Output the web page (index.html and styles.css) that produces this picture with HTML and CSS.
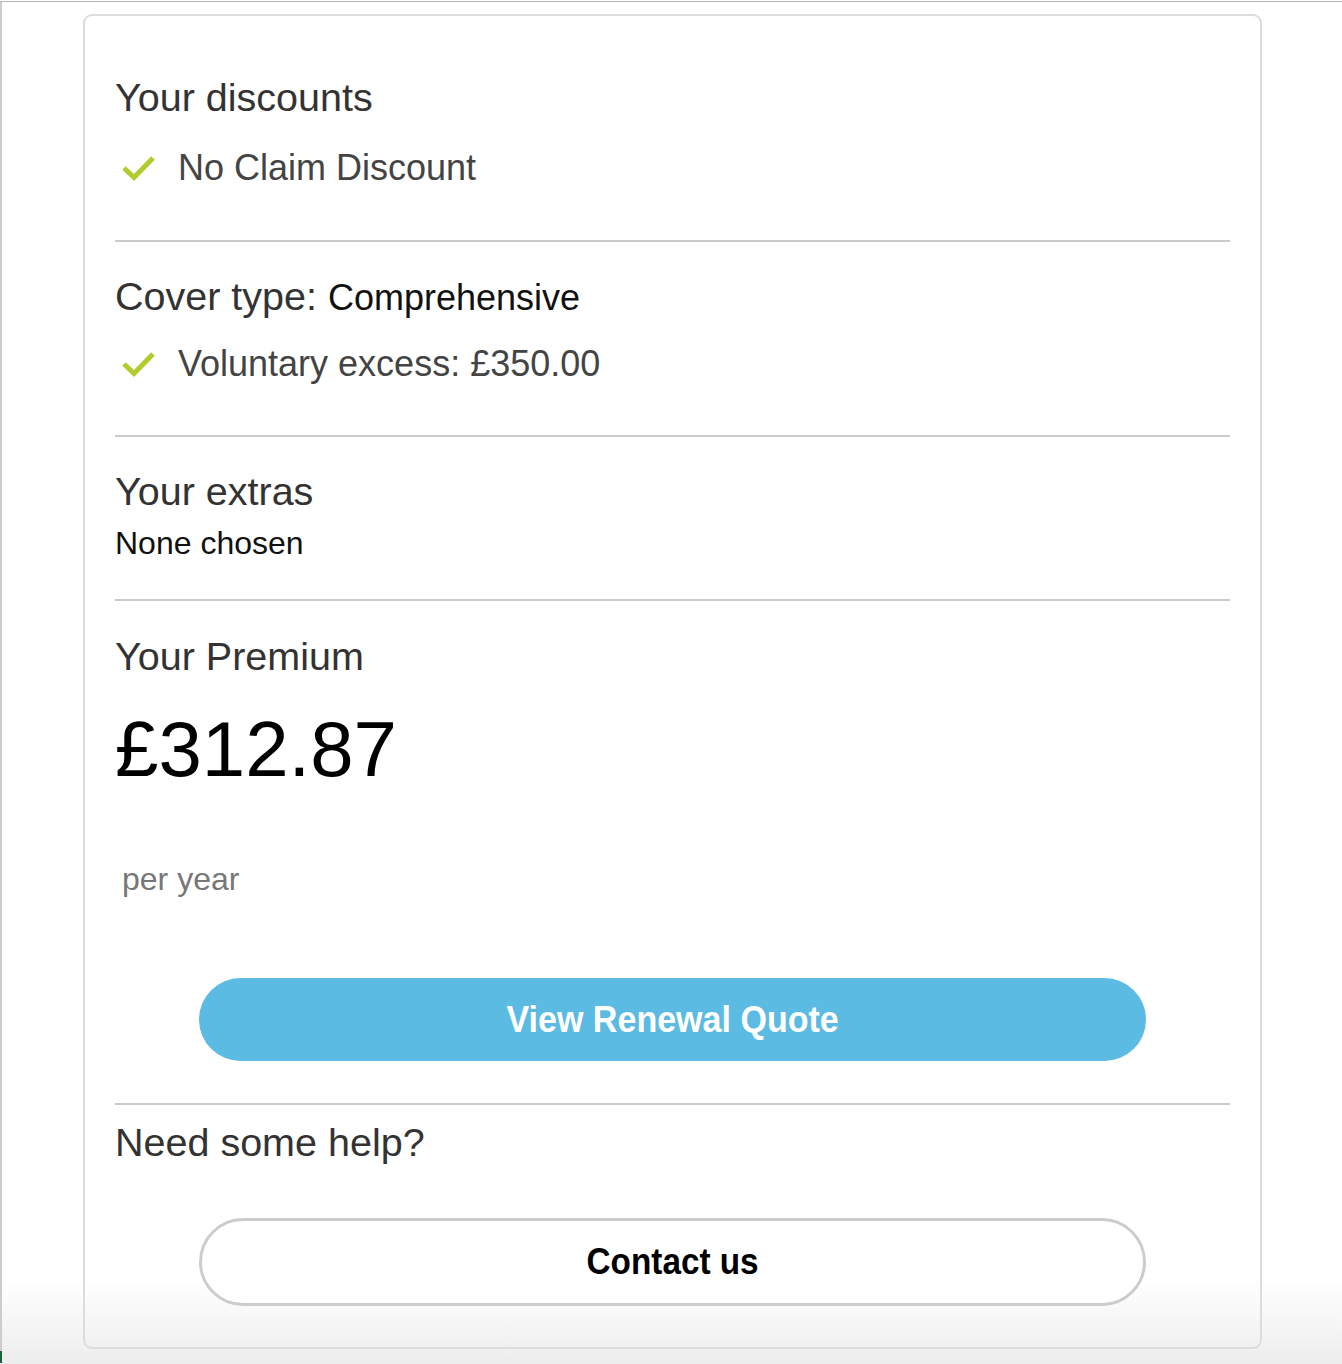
FILE: index.html
```html
<!DOCTYPE html>
<html lang="en">
<head>
<meta charset="utf-8">
<title>Your renewal</title>
<link rel="stylesheet" href="styles.css">
</head>
<body>
<div class="frame">
  <div class="card">
    <section class="section s-discounts">
      <h2 class="heading">Your discounts</h2>
      <div class="check-row">
        <svg class="check" viewBox="0 0 36 28" width="36" height="28" aria-hidden="true"><path d="M2 14 L12 23.5 L31 4" fill="none" stroke="#b3cb2c" stroke-width="5"/></svg>
        <span>No Claim Discount</span>
      </div>
    </section>
    <section class="section s-cover">
      <h2 class="heading">Cover type: <span class="heading-value">Comprehensive</span></h2>
      <div class="check-row">
        <svg class="check" viewBox="0 0 36 28" width="36" height="28" aria-hidden="true"><path d="M2 14 L12 23.5 L31 4" fill="none" stroke="#b3cb2c" stroke-width="5"/></svg>
        <span>Voluntary excess: £350.00</span>
      </div>
    </section>
    <section class="section s-extras">
      <h2 class="heading">Your extras</h2>
      <p class="plain">None chosen</p>
    </section>
    <section class="section s-premium">
      <h2 class="heading">Your Premium</h2>
      <p class="price">£312.87</p>
      <p class="period">per year</p>
      <a class="btn btn-primary" href="#"><span class="btn-label btn-label-wide">View Renewal Quote</span></a>
    </section>
    <section class="section s-help">
      <h2 class="heading">Need some help?</h2>
      <a class="btn btn-outline" href="#"><span class="btn-label">Contact us</span></a>
    </section>
  </div>
</div>
</body>
</html>
```

FILE: styles.css
```css
html, body {
  margin: 0;
  padding: 0;
}

body {
  font-family: "Liberation Sans", Arial, Helvetica, sans-serif;
  background: linear-gradient(to bottom, #ffffff 0, #ffffff 1280px, #ededed 1364px);
  min-height: 1364px;
  color: #333;
}

.frame {
  position: relative;
  margin-top: 1px;
  border-top: 1px solid #b4b4b4;
  border-left: 2px solid #cccccc;
  min-height: 1362px;
  box-sizing: border-box;
  padding-top: 12px;
}

.frame::after {
  content: "";
  position: absolute;
  left: -2px;
  bottom: 0;
  width: 2px;
  height: 12px;
  background: #17663a;
}

.card {
  margin-left: 81px;
  width: 1179px;
  box-sizing: border-box;
  border: 2px solid #dcdcdc;
  border-radius: 9px;
  padding: 0 30px;
  background: transparent;
}

.section {
  border-bottom: 2px solid #cbcbcb;
}

.section:last-child {
  border-bottom: none;
}

.heading {
  margin: 0;
  font-size: 39.5px;
  line-height: 45px;
  font-weight: normal;
  color: #333;
}

.heading-value {
  font-size: 36px;
  line-height: 1;
  color: #111;
}

.check-row {
  display: flex;
  align-items: center;
  font-size: 36px;
  line-height: 42px;
  color: #444;
}

.check {
  margin-left: 7px;
  margin-right: 20px;
  flex: none;
}

.plain {
  margin: 11px 0 0;
  font-size: 32px;
  line-height: 37px;
  color: #111;
}

.price {
  margin: 25px 0 0;
  font-size: 78px;
  line-height: 90px;
  color: #000;
}

.period {
  margin: 67px 0 0 7px;
  font-size: 32px;
  line-height: 37px;
  color: #777;
}

.s-discounts {
  padding: 59px 0 51px;
}
.s-discounts .check-row {
  margin-top: 27px;
}

.s-cover {
  padding: 32px 0 50px;
}
.s-cover .check-row {
  margin-top: 24px;
}

.s-extras {
  padding: 32px 0 37px;
}

.s-premium {
  padding: 33px 0 42px;
}

.s-help {
  padding: 15px 0 41px;
}

.btn {
  display: flex;
  align-items: center;
  justify-content: center;
  width: 85%;
  margin: 0 auto;
  box-sizing: border-box;
  border-radius: 60px;
  text-decoration: none;
  font-weight: bold;
  font-size: 37px;
}

.btn-label {
  display: inline-block;
  transform: scaleX(0.9);
}

.btn-label-wide {
  transform: scaleX(0.92);
}

.btn-primary {
  margin-top: 80px;
  height: 83px;
  background: #5bbbe3;
  color: #fff;
}

.btn-outline {
  margin-top: 53px;
  height: 88px;
  border: 3px solid #cccccc;
  background: #fff;
  color: #000;
}
```
